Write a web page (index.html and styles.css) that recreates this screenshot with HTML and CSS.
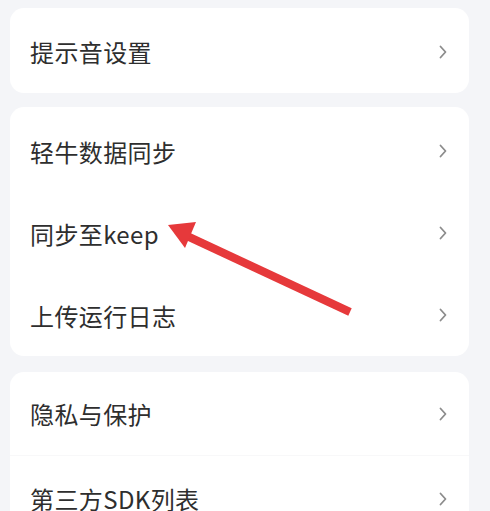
FILE: index.html
```html
<!DOCTYPE html>
<html lang="zh">
<head>
<meta charset="utf-8">
<link rel="stylesheet" href="styles.css">
</head>
<body>
<div class="page">
  <div class="card card-one">
    <div class="row"><span class="label">提示音设置</span><svg class="chev" width="8" height="14" viewBox="0 0 8 14"><path d="M1.5 1.5 L6.5 7 L1.5 12.5"/></svg></div>
  </div>
  <div class="card card-two">
    <div class="row"><span class="label">轻牛数据同步</span><svg class="chev" width="8" height="14" viewBox="0 0 8 14"><path d="M1.5 1.5 L6.5 7 L1.5 12.5"/></svg></div>
    <div class="row"><span class="label">同步至keep</span><svg class="chev" width="8" height="14" viewBox="0 0 8 14"><path d="M1.5 1.5 L6.5 7 L1.5 12.5"/></svg></div>
    <div class="row"><span class="label">上传运行日志</span><svg class="chev" width="8" height="14" viewBox="0 0 8 14"><path d="M1.5 1.5 L6.5 7 L1.5 12.5"/></svg></div>
  </div>
  <div class="card card-three">
    <div class="row tall"><span class="label">隐私与保护</span><svg class="chev" width="8" height="14" viewBox="0 0 8 14"><path d="M1.5 1.5 L6.5 7 L1.5 12.5"/></svg></div>
    <div class="row tall split"><span class="label">第三方SDK列表</span><svg class="chev" width="8" height="14" viewBox="0 0 8 14"><path d="M1.5 1.5 L6.5 7 L1.5 12.5"/></svg></div>
  </div>
  <svg class="arrow" width="490" height="511" viewBox="0 0 490 511">
    <line x1="187" y1="236" x2="350" y2="312" stroke="#e6393b" stroke-width="8" stroke-linecap="butt"/>
    <polygon points="168,225 196,222 185,248" fill="#e6393b"/>
  </svg>
</div>
</body>
</html>
```

FILE: styles.css
```css
html, body {
  margin: 0;
  padding: 0;
  background: #f4f5f8;
  overflow: hidden;
}
.page {
  position: relative;
  width: 490px;
  height: 511px;
  padding-top: 8px;
  box-sizing: border-box;
  overflow: hidden;
  font-family: "Noto Sans CJK SC", "Noto Sans", sans-serif;
}
.card {
  margin-left: 10px;
  width: 459px;
  background: #ffffff;
  border-radius: 14px;
  box-sizing: border-box;
}
.card-one {
  height: 85px;
  padding-top: 2px;
}
.card-one .row {
  height: 83px;
}
.card-two {
  margin-top: 14px;
  height: 249px;
  padding-top: 3px;
}
.card-three {
  margin-top: 16px;
  height: 200px;
}
.row {
  height: 82px;
  display: flex;
  align-items: center;
  justify-content: space-between;
  padding: 0 21px 0 20px;
  box-sizing: border-box;
}
.row.tall {
  height: 83px;
}
.row.split {
  border-top: 1px solid #f8f8f9;
  height: 86px;
}
.label {
  font-size: 24px;
  color: #2e2e2e;
  letter-spacing: 0.4px;
}
.chev {
  margin-right: 1px;
}
.chev path {
  fill: none;
  stroke: #8c8c8c;
  stroke-width: 1.8;
  stroke-linecap: round;
  stroke-linejoin: round;
}
.arrow {
  position: absolute;
  left: 0;
  top: 0;
  pointer-events: none;
}
```
